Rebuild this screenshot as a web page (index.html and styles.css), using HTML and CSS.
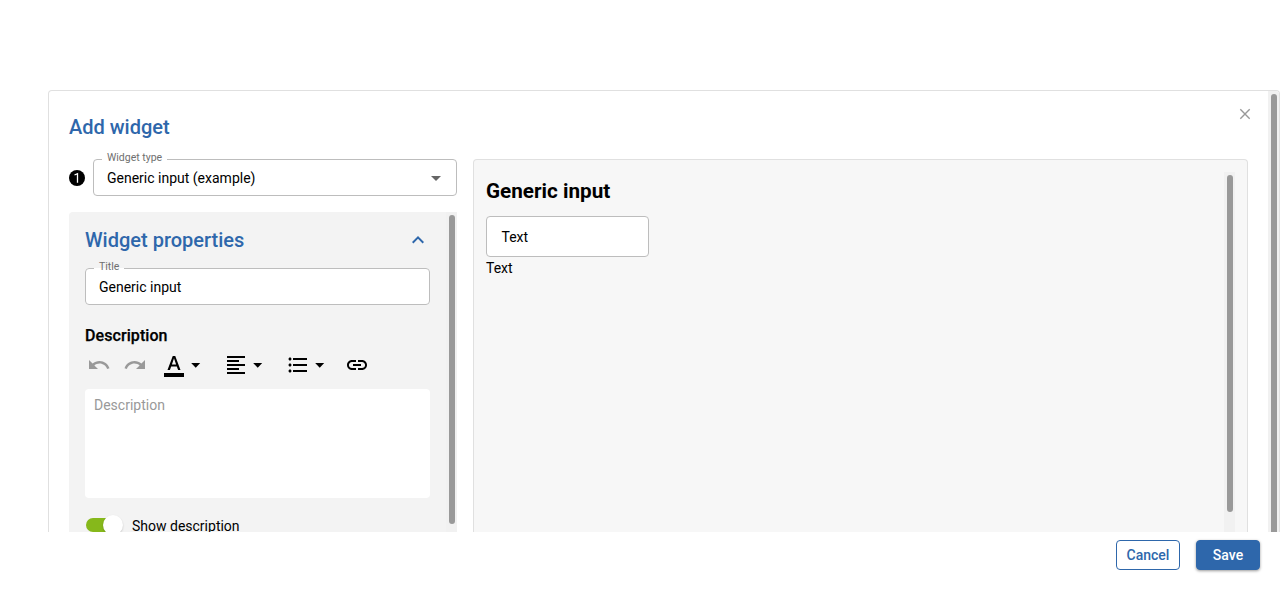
FILE: index.html
```html
<!DOCTYPE html>
<html lang="en">
<head>
<meta charset="utf-8">
<title>Add widget</title>
<link rel="stylesheet" href="styles.css">
</head>
<body>
<div class="dialog">
  <div class="dialog-body">
    <h2 class="dialog-title">Add widget</h2>
    <svg class="close" viewBox="0 0 10 10"><path d="M.3.3l9.400 9.400M9.700.3L.3 9.700"/></svg>
    <div class="columns">
      <div class="settings">
        <div class="type-row">
          <span class="step"><svg viewBox="0 0 16 16"><circle cx="8" cy="8" r="8"/><path d="M5.500 5L8.500 3.700v9"/></svg></span>
          <fieldset class="field">
            <legend><span>Widget type</span></legend>
            <span class="value">Generic input (example)</span>
            <svg class="icon select-arrow" viewBox="0 0 24 24"><path d="M7 10l5 5 5-5z"/></svg>
          </fieldset>
        </div>
        <div class="panel">
          <div class="panel-content">
            <div class="panel-head">
              <h2>Widget properties</h2>
              <svg class="icon chevron" viewBox="0 0 24 24"><path d="M12 8l-6 6 1.410 1.410L12 10.830l4.590 4.580L18 14z"/></svg>
            </div>
            <fieldset class="field">
              <legend><span>Title</span></legend>
              <span class="value">Generic input</span>
            </fieldset>
            <h3>Description</h3>
            <div class="toolbar">
              <svg class="icon muted" viewBox="0 0 24 24"><path d="M12.5 8c-2.65 0-5.05.99-6.9 2.6L2 7v9h9l-3.62-3.62c1.39-1.16 3.16-1.88 5.12-1.88 3.54 0 6.55 2.31 7.6 5.5l2.37-.78C21.08 11.03 17.15 8 12.5 8z"/></svg>
              <svg class="icon muted redo" viewBox="0 0 24 24"><path d="M18.4 10.6C16.55 8.99 14.15 8 11.5 8c-4.65 0-8.58 3.03-9.96 7.22L3.9 16c1.05-3.19 4.05-5.5 7.6-5.5 1.95 0 3.73.72 5.12 1.88L13 16h9V7l-3.6 3.6z"/></svg>
              <span class="tool"><svg class="icon" viewBox="0 0 24 24"><path d="M2 20h20v4H2zM5.49 17h2.42l1.27-3.58h5.65L16.09 17h2.42L13.25 3h-2.5L5.49 17zm4.42-5.61l2.03-5.79h.12l2.03 5.79H9.91z"/></svg><svg class="icon caret" viewBox="0 0 24 24"><path d="M7.2 10l4.500 4.700 4.500-4.700z"/></svg></span>
              <span class="tool"><svg class="icon" viewBox="0 0 24 24"><path d="M15 15H3v2h12v-2zm0-8H3v2h12V7zM3 13h18v-2H3v2zm0 8h18v-2H3v2zM3 3v2h18V3H3z"/></svg><svg class="icon caret" viewBox="0 0 24 24"><path d="M7.2 10l4.500 4.700 4.500-4.700z"/></svg></span>
              <span class="tool"><svg class="icon" viewBox="0 0 24 24"><path d="M4 10.5c-.83 0-1.5.67-1.5 1.5s.67 1.5 1.5 1.5 1.5-.67 1.5-1.5-.67-1.5-1.5-1.5zm0-6c-.83 0-1.5.67-1.5 1.5S3.17 7.5 4 7.5 5.5 6.83 5.5 6 4.83 4.5 4 4.5zm0 12c-.83 0-1.5.68-1.5 1.5s.68 1.5 1.5 1.5 1.5-.68 1.5-1.5-.67-1.5-1.5-1.5zM7 19h14v-2H7v2zm0-6h14v-2H7v2zm0-8v2h14V5H7z"/></svg><svg class="icon caret" viewBox="0 0 24 24"><path d="M7.2 10l4.500 4.700 4.500-4.700z"/></svg></span>
              <svg class="icon link" viewBox="0 0 24 24"><path d="M3.9 12c0-1.71 1.39-3.1 3.1-3.1h4V7H7c-2.76 0-5 2.24-5 5s2.24 5 5 5h4v-1.9H7c-1.71 0-3.1-1.39-3.1-3.1zM8 13h8v-2H8v2zm9-6h-4v1.9h4c1.71 0 3.1 1.39 3.1 3.1s-1.39 3.1-3.1 3.1h-4V17h4c2.76 0 5-2.24 5-5s-2.24-5-5-5z"/></svg>
            </div>
            <div class="editor">Description</div>
            <div class="switch-row"><span class="switch"><span class="knob"></span></span><span>Show description</span></div>
          </div>
          <div class="track"><div class="thumb panel-thumb"></div></div>
        </div>
      </div>
      <div class="preview">
        <div class="preview-content">
          <h2>Generic input</h2>
          <div class="preview-input">Text</div>
          <div class="preview-text">Text</div>
        </div>
        <div class="track"><div class="thumb preview-thumb"></div></div>
      </div>
    </div>
  </div>
  <div class="track dialog-track"><div class="thumb dialog-thumb"></div></div>
</div>
<div class="actions">
  <button class="btn cancel">Cancel</button>
  <button class="btn save">Save</button>
</div>
</body>
</html>
```
FILE: styles.css
```css
* { box-sizing: border-box; }
body {
  margin: 0;
  height: 590px;
  padding: 90px 0 0 48px;
  overflow: hidden;
  background: #fff;
  color: #000;
  font: 14px/20px Roboto, sans-serif;
}
h2, h3 { margin: 0; }
.icon { display: block; flex: none; width: 24px; height: 24px; fill: #000; }

.dialog {
  display: flex;
  height: 442px;
  border: 1px solid #e0e0e0;
  border-bottom: 0;
  border-radius: 4px 4px 0 0;
  overflow: hidden;
}
.dialog-body { position: relative; flex: 1; padding: 24px 20px 0; }
.dialog-title { color: #2e67ab; font-size: 20px; font-weight: 500; line-height: 24px; }
.close {
  position: absolute;
  top: 18px;
  right: 18px;
  width: 10px;
  height: 10px;
  overflow: visible;
  stroke: #999;
  stroke-width: 1.4;
}
.columns { display: flex; gap: 16px; height: 373px; margin-top: 20px; }
.settings { display: flex; flex-direction: column; gap: 16px; width: 388px; }
.type-row { display: flex; align-items: center; gap: 8px; }
.step, .step svg { display: block; width: 16px; height: 16px; }
.step path { fill: none; stroke: #fff; stroke-width: 1.3; }

.field {
  display: flex;
  flex: 1;
  align-items: center;
  min-width: 0;
  height: 37px;
  margin: 0;
  padding: 0 8px;
  border: 1px solid #bdbdbd;
  border-radius: 4px;
  background: #fff;
}
.field legend { height: 1px; padding: 0 5px; color: #6f6f6f; font-size: 10.5px; line-height: 1px; }
.field legend span { display: block; transform: translateY(-2px); }
.field .value { flex: 1; padding: 2px 5px 0; line-height: 33px; }
.select-arrow { fill: #666; }

.panel { display: flex; height: 320px; background: #f3f3f3; border-radius: 4px 0 0 0; overflow: hidden; }
.panel-content { flex: 1; padding: 16px 16px 0; }
.panel-head { display: flex; align-items: center; justify-content: space-between; height: 24px; margin-bottom: 16px; }
.panel-head h2 { color: #2e67ab; font-size: 20px; font-weight: 500; }
.chevron { fill: #2e67ab; }
.panel h3 { margin-top: 20px; font-size: 16px; font-weight: 500; line-height: 22px; letter-spacing: .08px; -webkit-text-stroke: .25px #000; }
.toolbar { display: flex; height: 24px; margin: 6px 0 12px; padding-left: 2px; }
.muted { fill: #999; }
.redo { margin: 0 15px 0 12px; }
.tool { display: flex; margin-right: 16px; }
.caret { margin-left: -2px; }
.link { margin-left: -3px; }
.editor { height: 109px; padding: 6px 9px; border-radius: 4px; background: #fff; color: #999; }
.switch-row { display: flex; align-items: center; gap: 10px; margin-top: 18px; }
.switch { display: flex; justify-content: flex-end; align-items: center; width: 36px; height: 14px; margin: 0 0 2px 1px; border-radius: 7px; background: #86b81b; }
.knob { width: 20px; height: 20px; margin-right: -1px; border-radius: 50%; background: #fff; box-shadow: 0 1px 2px rgba(0, 0, 0, .2); }

.track { flex: none; width: 11px; padding: 3px 2px 0 3px; background: #f1f1f1; }
.thumb { width: 6px; border-radius: 3px; background: #999; }
.panel-thumb { height: 309px; }
.preview-thumb { height: 337px; }
.dialog-thumb { height: 500px; }

.preview { display: flex; flex: 1; padding: 12px 12px 0; border: 1px solid #e0e0e0; border-bottom: 0; border-radius: 4px 4px 0 0; background: #f7f7f7; }
.preview-content { flex: 1; padding-top: 7px; }
.preview-content h2 { font-size: 20.7px; font-weight: 700; line-height: 24px; }
.preview-input { width: 163px; height: 41px; margin-top: 13px; padding-left: 14.5px; border: 1px solid #bdbdbd; border-radius: 4px; background: #fff; line-height: 40px; }
.preview-text { margin-top: 1px; }

.actions { display: flex; justify-content: flex-end; gap: 16px; padding: 8px 20px; }
.btn { width: 64px; height: 30px; padding: 0; border: 1px solid #2e67ab; border-radius: 4px; background: #fff; color: #2e67ab; font: 500 14px/20px Roboto, sans-serif; }
.save { background: #2e67ab; color: #fff; box-shadow: 0 1px 3px rgba(0, 0, 0, .4); }
```
